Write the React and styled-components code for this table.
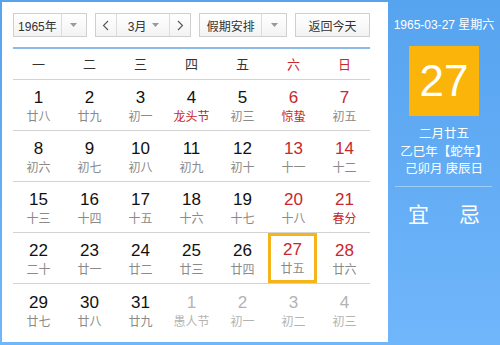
import React from 'react';
import styled, { createGlobalStyle } from 'styled-components';

const FONT = '"Liberation Sans", Arial, "Noto Sans CJK SC", sans-serif';
const RED = '#c9262d';
const GRAY = '#8a8a8a';
const MUTED = '#b3b3b3';

const WEEKDAYS = ['一', '二', '三', '四', '五', '六', '日'];

// [day, lunar, kind] kind: r red number, h red lunar, o other month, t today
const WEEKS = [
  [[1, '廿八'], [2, '廿九'], [3, '初一'], [4, '龙头节', 'h'], [5, '初三'], [6, '惊蛰', 'rh'], [7, '初五', 'r']],
  [[8, '初六'], [9, '初七'], [10, '初八'], [11, '初九'], [12, '初十'], [13, '十一', 'r'], [14, '十二', 'r']],
  [[15, '十三'], [16, '十四'], [17, '十五'], [18, '十六'], [19, '十七'], [20, '十八', 'r'], [21, '春分', 'rh']],
  [[22, '二十'], [23, '廿一'], [24, '廿二'], [25, '廿三'], [26, '廿四'], [27, '廿五', 'rt'], [28, '廿六', 'r']],
  [[29, '廿七'], [30, '廿八'], [31, '廿九'], [1, '愚人节', 'o'], [2, '初一', 'o'], [3, '初二', 'o'], [4, '初三', 'o']],
];

const GlobalStyle = createGlobalStyle`
  html, body {
    margin: 0;
    padding: 0;
    background: #fff;
  }
`;

const Arrow = () => (
  <svg width="7" height="4" viewBox="0 0 7 4">
    <path d="M0 0h7L3.5 4z" fill="#999" />
  </svg>
);

const Chevron = ({ dir }) => (
  <svg width="7" height="11" viewBox="0 0 7 11">
    <path
      d={dir === 'left' ? 'M6 1L1.5 5.5 6 10' : 'M1 1l4.5 4.5L1 10'}
      fill="none"
      stroke="#555"
      strokeWidth="1.1"
    />
  </svg>
);

const App = () => {
  return (
    <>
      <GlobalStyle />
      <Frame>
        <Main>
          <Toolbar>
            <Select $width={74}>
              <SelectText>1965年</SelectText>
              <ArrowBox>
                <Arrow />
              </ArrowBox>
            </Select>
            <Select $width={97}>
              <NavBtn>
                <Chevron dir="left" />
              </NavBtn>
              <MonthText>
                3月
                <Arrow />
              </MonthText>
              <NavBtn $right>
                <Chevron dir="right" />
              </NavBtn>
            </Select>
            <Select $width={88}>
              <SelectText>假期安排</SelectText>
              <ArrowBox>
                <Arrow />
              </ArrowBox>
            </Select>
            <TodayBtn>返回今天</TodayBtn>
          </Toolbar>

          <WeekHeader>
            {WEEKDAYS.map((w, i) => (
              <WeekName key={w} $red={i > 4}>
                {w}
              </WeekName>
            ))}
          </WeekHeader>

          <Weeks>
            {WEEKS.map((week, r) => (
              <WeekRow key={r} $last={r === WEEKS.length - 1}>
                {week.map(([day, lunar, kind = ''], c) => (
                  <DayCell key={c} $today={kind.includes('t')}>
                    <DayNum
                      $red={kind.includes('r')}
                      $muted={kind.includes('o')}
                    >
                      {day}
                    </DayNum>
                    <Lunar
                      $red={kind.includes('h')}
                      $muted={kind.includes('o')}
                    >
                      {lunar}
                    </Lunar>
                  </DayCell>
                ))}
              </WeekRow>
            ))}
          </Weeks>
        </Main>

        <Side>
          <SideDate>1965-03-27 星期六</SideDate>
          <BigDay>27</BigDay>
          <SideLines>
            <span>二月廿五</span>
            <span>乙巳年【蛇年】</span>
            <span>己卯月 庚辰日</span>
          </SideLines>
          <SideRule />
          <YiJi>
            <span>宜</span>
            <span>忌</span>
          </YiJi>
        </Side>
      </Frame>
    </>
  );
};

const Frame = styled.div`
  width: 500px;
  height: 345px;
  box-sizing: border-box;
  display: flex;
  padding: 2px 0 3px 2px;
  background: linear-gradient(#56a3ef, #70b6fb);
  font-family: ${FONT};
`;

const Main = styled.div`
  width: 386px;
  box-sizing: border-box;
  background: #fff;
  padding: 11px 18px 0 11px;
`;

const Toolbar = styled.div`
  display: flex;
  align-items: center;
  gap: 8px;
  height: 24px;
`;

const Select = styled.div`
  display: flex;
  box-sizing: border-box;
  width: ${(p) => p.$width}px;
  height: 24px;
  border: 1px solid #cfcfcf;
  background: linear-gradient(#fff, #f3f3f3);
  font-size: 12px;
  color: #333;
`;

const SelectText = styled.div`
  flex: 1;
  display: flex;
  align-items: center;
  justify-content: center;
`;

const ArrowBox = styled.div`
  width: 24px;
  display: flex;
  align-items: center;
  justify-content: center;
  border-left: 1px solid #dcdcdc;
`;

const NavBtn = styled.div`
  width: 20px;
  display: flex;
  align-items: center;
  justify-content: center;
  ${(p) => (p.$right ? 'border-left' : 'border-right')}: 1px solid #dcdcdc;
`;

const MonthText = styled.div`
  flex: 1;
  display: flex;
  align-items: center;
  justify-content: space-between;
  padding: 0 10px 0 11px;
`;

const TodayBtn = styled.div`
  width: 75px;
  height: 24px;
  box-sizing: border-box;
  border: 1px solid #cfcfcf;
  background: linear-gradient(#fff, #f3f3f3);
  font-size: 12px;
  color: #333;
  display: flex;
  align-items: center;
  justify-content: center;
  margin-left: auto;
`;

const WeekHeader = styled.div`
  display: grid;
  grid-template-columns: repeat(7, 51px);
  margin-top: 10px;
  height: 30px;
  border-top: 2px solid #8dbbe8;
  border-bottom: 1px solid #d3d3d3;
`;

const WeekName = styled.div`
  display: flex;
  align-items: center;
  justify-content: center;
  padding-bottom: 2px;
  font-size: 13px;
  color: ${(p) => (p.$red ? RED : '#333')};
`;

const Weeks = styled.div`
  display: flex;
  flex-direction: column;
`;

const WeekRow = styled.div`
  display: grid;
  grid-template-columns: repeat(7, 51px);
  height: 51px;
  box-sizing: border-box;
  border-bottom: ${(p) => (p.$last ? 'none' : '1px solid #d3d3d3')};
`;

const DayCell = styled.div`
  display: flex;
  flex-direction: column;
  align-items: center;
  justify-content: center;
  gap: 1px;
  box-sizing: border-box;
  margin: ${(p) => (p.$today ? '0 2px 0 0' : '0')};
  border: ${(p) => (p.$today ? '3px solid #f5b31c' : 'none')};
  padding-top: ${(p) => (p.$today ? '0' : '2px')};
`;

const DayNum = styled.div`
  font-size: 17px;
  line-height: 19px;
  color: ${(p) => (p.$muted ? MUTED : p.$red ? RED : '#111')};
`;

const Lunar = styled.div`
  font-size: 12px;
  line-height: 16px;
  font-family: "Noto Sans CJK SC", sans-serif;
  color: ${(p) => (p.$muted ? MUTED : p.$red ? RED : GRAY)};
`;

const Side = styled.div`
  flex: 1;
  display: flex;
  flex-direction: column;
  align-items: center;
  color: #fff;
  padding-top: 15px;
`;

const SideDate = styled.div`
  font-size: 12px;
  line-height: 16px;
`;

const BigDay = styled.div`
  margin-top: 13px;
  width: 70px;
  height: 70px;
  background: #fbb40a;
  display: flex;
  align-items: center;
  justify-content: center;
  font-size: 44px;
`;

const SideLines = styled.div`
  margin-top: 8px;
  display: flex;
  flex-direction: column;
  align-items: center;
  font-size: 12.5px;
  line-height: 17.5px;
  font-family: "Noto Sans CJK SC", sans-serif;
`;

const SideRule = styled.div`
  align-self: stretch;
  margin: 9px 8px 0 7px;
  border-top: 1px solid #9ccbf7;
`;

const YiJi = styled.div`
  margin-top: 11px;
  display: flex;
  gap: 30px;
  font-size: 21px;
  font-family: "Noto Sans CJK SC", sans-serif;
`;

export default App;
